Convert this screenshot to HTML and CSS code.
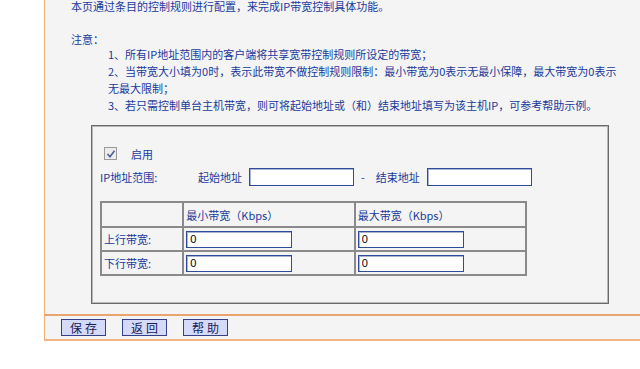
FILE: index.html
```html
<!DOCTYPE html>
<html lang="zh-CN">
<head>
    <meta charset="UTF-8">
    <meta name="viewport" content="width=device-width, initial-scale=1.0">
    <title>IP带宽控制</title>
    <link rel="stylesheet" href="styles.css">
</head>
<body>
    <div class="main">
        <div class="notes">
            <p class="intro">本页通过条目的控制规则进行配置，来完成IP带宽控制具体功能。</p>
            <p class="note-title">注意：</p>
            <div class="note-list">
                <p>1、所有IP地址范围内的客户端将共享宽带控制规则所设定的带宽；</p>
                <p>2、当带宽大小填为0时，表示此带宽不做控制规则限制：最小带宽为0表示无最小保障，最大带宽为0表示无最大限制；</p>
                <p>3、若只需控制单台主机带宽，则可将起始地址或（和）结束地址填写为该主机IP，可参考帮助示例。</p>
            </div>
        </div>

        <div class="panel">
            <div class="enable-row">
                <span class="checkbox">
                    <svg width="10" height="10" viewBox="0 0 10 10"><path d="M1.5 5 L4 7.8 L8.5 1.8" fill="none" stroke="#4b5f8f" stroke-width="1.6"/></svg>
                </span>
                <span>启用</span>
            </div>
            <div class="range-row">
                <span class="range-label">IP地址范围:</span>
                <span>起始地址</span>
                <input type="text" class="addr">
                <span class="dash">-</span>
                <span>结束地址</span>
                <input type="text" class="addr">
            </div>
            <table class="bw-table">
                <colgroup>
                    <col class="c-label">
                    <col class="c-val">
                    <col class="c-val">
                </colgroup>
                <tr class="head">
                    <td></td>
                    <td>最小带宽（Kbps）</td>
                    <td>最大带宽（Kbps）</td>
                </tr>
                <tr>
                    <td>上行带宽:</td>
                    <td><input type="text" class="bw" value="0"></td>
                    <td><input type="text" class="bw" value="0"></td>
                </tr>
                <tr>
                    <td>下行带宽:</td>
                    <td><input type="text" class="bw" value="0"></td>
                    <td><input type="text" class="bw" value="0"></td>
                </tr>
            </table>
        </div>

        <div class="actions">
            <button>保存</button>
            <button>返回</button>
            <button>帮助</button>
        </div>
    </div>
</body>
</html>
```

FILE: styles.css
```css
body {
    margin: 0;
    background-color: #fff;
    font-family: "Noto Sans CJK SC", "Liberation Sans", sans-serif;
    font-size: 11px;
    color: #1a3a9c;
}
.main {
    margin-left: 44px;
    margin-top: -2px;
    background-color: #f4f4f4;
    border-left: 1px solid #eeae74;
    border-bottom: 2px solid #f1b684;
}
.notes {
    padding-left: 26px;
    line-height: 17px;
}
.notes p {
    margin: 0;
}
.note-title {
    margin-top: 16px !important;
}
.note-list {
    margin-top: -2px;
    padding-left: 37px;
    width: 512px;
}
.panel {
    margin: 11px 0 0 46px;
    width: 518px;
    box-sizing: border-box;
    border: 1px solid #6a6a6a;
    box-shadow: inset 1px 1px 0 #b8b8b8, inset -1px -1px 0 #b8b8b8;
    padding: 19px 7px 27px 8px;
}
.enable-row {
    display: flex;
    align-items: center;
    height: 17px;
}
.checkbox {
    display: inline-flex;
    align-items: center;
    justify-content: center;
    width: 11px;
    height: 11px;
    border: 1px solid #9a9a9a;
    background-color: #ececec;
    margin: 0 14px 0 4px;
}
.range-row {
    display: flex;
    align-items: center;
    height: 20px;
    margin-top: 5px;
}
.range-label {
    width: 98px;
}
.addr {
    width: 105px;
    height: 18px;
    box-sizing: border-box;
    margin: 0 0 0 7px;
    padding: 0 3px;
    border: 1px solid #2f4b9b;
    box-shadow: inset 1px 1px 0 #a9b3d4;
    background-color: #fff;
}
.dash {
    margin: 0 11px 0 7px;
}
.bw-table {
    margin-top: 14px;
    width: 427px;
    border-collapse: collapse;
    border: 2px solid #8a8a8a;
}
.c-label {
    width: 83px;
}
.c-val {
    width: 172px;
}
.bw-table td {
    border: 2px solid #8a8a8a;
    height: 22px;
    padding: 0 2px;
}
.bw-table .head td {
    height: 23px;
}
.bw {
    display: block;
    width: 106px;
    height: 17px;
    box-sizing: border-box;
    margin: 0;
    padding: 0 3px;
    border: 1px solid #2f4b9b;
    box-shadow: inset 1px 1px 0 #a9b3d4;
    background-color: #fff;
    font-family: "Liberation Sans", sans-serif;
    font-size: 11px;
    color: #000;
}
.actions {
    margin-top: 10px;
    border-top: 2px solid #eaa470;
    padding: 3px 0 3px 16px;
    display: flex;
    gap: 16px;
}
.actions button {
    width: 45px;
    height: 17px;
    padding: 0 0 0 3px;
    border: 1px solid #34408a;
    background-color: #d6daf9;
    color: #15205a;
    font-family: "Noto Sans CJK SC", sans-serif;
    font-size: 12px;
    line-height: 15px;
    letter-spacing: 3px;
    cursor: pointer;
}
```
